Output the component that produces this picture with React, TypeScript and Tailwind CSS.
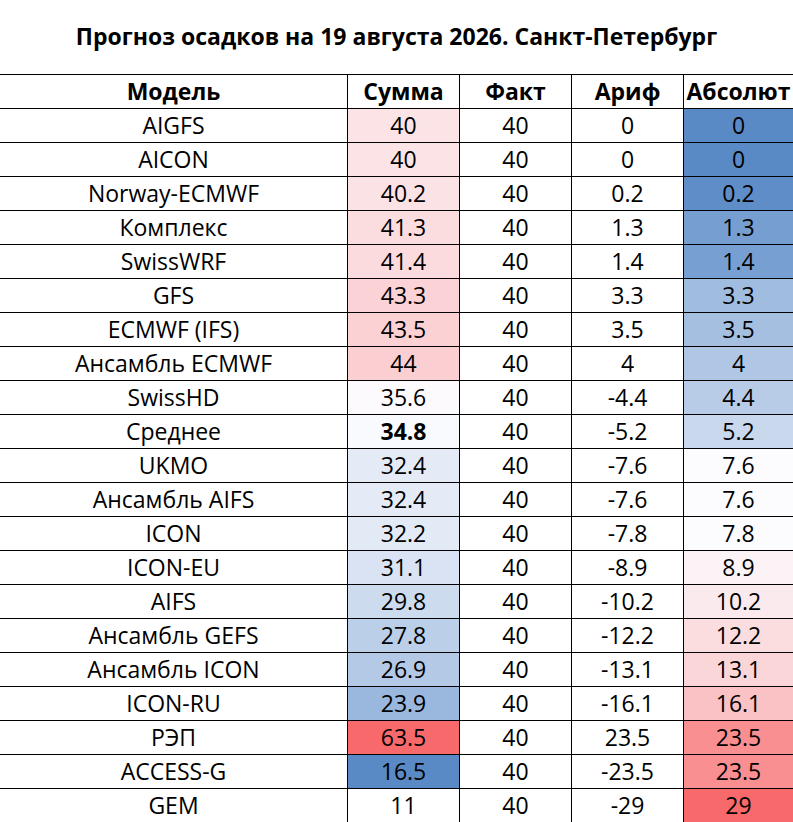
const rows = [
  { name: "AIGFS", sum: "40", sumBg: "bg-[#fbe3e6]", arif: "0", abs: "0", absBg: "bg-[#5a8ac6]" },
  { name: "AICON", sum: "40", sumBg: "bg-[#fbe3e6]", arif: "0", abs: "0", absBg: "bg-[#5a8ac6]" },
  { name: "Norway-ECMWF", sum: "40.2", sumBg: "bg-[#fbe2e5]", arif: "0.2", abs: "0.2", absBg: "bg-[#5e8dc8]" },
  { name: "Комплекс", sum: "41.3", sumBg: "bg-[#fbdcdf]", arif: "1.3", abs: "1.3", absBg: "bg-[#769ed0]" },
  { name: "SwissWRF", sum: "41.4", sumBg: "bg-[#fbdbde]", arif: "1.4", abs: "1.4", absBg: "bg-[#789fd1]" },
  { name: "GFS", sum: "43.3", sumBg: "bg-[#fbd2d5]", arif: "3.3", abs: "3.3", absBg: "bg-[#a0bcdf]" },
  { name: "ECMWF (IFS)", sum: "43.5", sumBg: "bg-[#fbd1d4]", arif: "3.5", abs: "3.5", absBg: "bg-[#a5bfe0]" },
  { name: "Ансамбль ECMWF", sum: "44", sumBg: "bg-[#fbced1]", arif: "4", abs: "4", absBg: "bg-[#afc6e4]" },
  { name: "SwissHD", sum: "35.6", sumBg: "bg-[#fcfafd]", arif: "-4.4", abs: "4.4", absBg: "bg-[#b8cce7]" },
  { name: "Среднее", sum: "34.8", sumBg: "bg-[#f9fafe]", arif: "-5.2", abs: "5.2", absBg: "bg-[#c9d8ed]", bold: true },
  { name: "UKMO", sum: "32.4", sumBg: "bg-[#e4ebf7]", arif: "-7.6", abs: "7.6", absBg: "bg-[#fcfcff]" },
  { name: "Ансамбль AIFS", sum: "32.4", sumBg: "bg-[#e4ebf7]", arif: "-7.6", abs: "7.6", absBg: "bg-[#fcfcff]" },
  { name: "ICON", sum: "32.2", sumBg: "bg-[#e2eaf6]", arif: "-7.8", abs: "7.8", absBg: "bg-[#fcfbfe]" },
  { name: "ICON-EU", sum: "31.1", sumBg: "bg-[#d9e3f3]", arif: "-8.9", abs: "8.9", absBg: "bg-[#fcf3f6]" },
  { name: "AIFS", sum: "29.8", sumBg: "bg-[#cddbef]", arif: "-10.2", abs: "10.2", absBg: "bg-[#fbeaed]" },
  { name: "Ансамбль GEFS", sum: "27.8", sumBg: "bg-[#bccfe8]", arif: "-12.2", abs: "12.2", absBg: "bg-[#fbdcdf]" },
  { name: "Ансамбль ICON", sum: "26.9", sumBg: "bg-[#b4c9e6]", arif: "-13.1", abs: "13.1", absBg: "bg-[#fbd6d9]" },
  { name: "ICON-RU", sum: "23.9", sumBg: "bg-[#9ab7dd]", arif: "-16.1", abs: "16.1", absBg: "bg-[#fac2c4]" },
  { name: "РЭП", sum: "63.5", sumBg: "bg-[#f8696b]", arif: "23.5", abs: "23.5", absBg: "bg-[#f98f91]" },
  { name: "ACCESS-G", sum: "16.5", sumBg: "bg-[#5a8ac6]", arif: "-23.5", abs: "23.5", absBg: "bg-[#f98f91]" },
  { name: "GEM", sum: "11", sumBg: "bg-white", arif: "-29", abs: "29", absBg: "bg-[#f8696b]" },
];

const headers = ["Модель", "Сумма", "Факт", "Ариф", "Абсолют"];

function Cell({ children, className = "" }: { children: React.ReactNode; className?: string }) {
  return <div className={`h-[33px] whitespace-nowrap text-center leading-[33px] ${className}`}>{children}</div>;
}

export default function App() {
  return (
    <div className="h-[822px] w-[793px] overflow-hidden bg-white font-['Open_Sans',sans-serif] text-[23px] text-black">
      {/* Title */}
      <div className="h-[74px] whitespace-nowrap pt-[21px] text-center text-[23px] font-bold leading-[30px]">
        Прогноз осадков на 19 августа 2026. Санкт-Петербург
      </div>

      {/* Table */}
      <div className="grid grid-cols-[347px_111px_111px_111px_1fr] gap-px bg-black pt-px">
        {headers.map((h) => (
          <Cell key={h} className="bg-white font-bold">
            {h}
          </Cell>
        ))}
        {rows.map((r) => (
          <div key={r.name} className="contents">
            <Cell className="bg-white">{r.name}</Cell>
            <Cell className={`${r.sumBg} ${r.bold ? "font-bold" : ""}`}>{r.sum}</Cell>
            <Cell className="bg-white">40</Cell>
            <Cell className="bg-white">{r.arif}</Cell>
            <Cell className={r.absBg}>{r.abs}</Cell>
          </div>
        ))}
      </div>
    </div>
  );
}
